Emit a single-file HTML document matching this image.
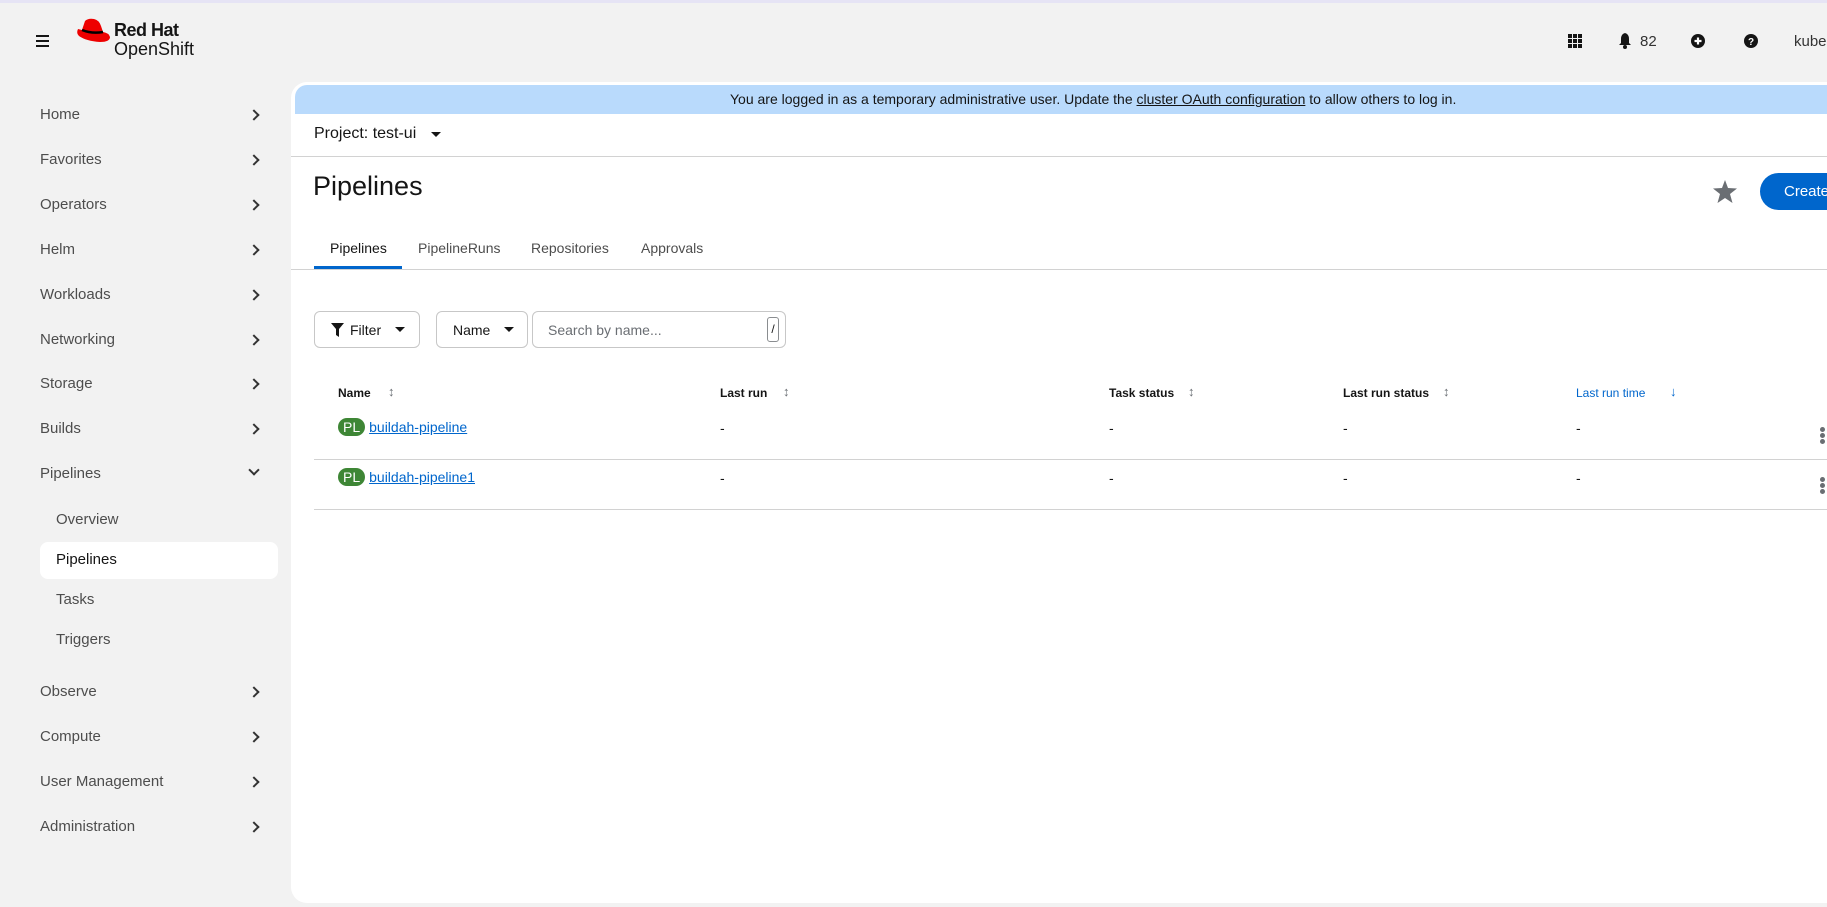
<!DOCTYPE html>
<html><head><meta charset="utf-8"><style>
*{box-sizing:border-box;margin:0;padding:0}
body{width:1827px;height:907px;overflow:hidden;background:#f2f2f2;font-family:"Liberation Sans",sans-serif;color:#151515;position:relative}
.a{position:absolute;white-space:nowrap}
.nav{font-size:15px;color:#4d4d4d;left:40px}
.chev{position:absolute;left:250px;width:8px;height:8px;border-right:2px solid #333;border-top:2px solid #333;transform:rotate(45deg)}
.panel{position:absolute;left:291px;top:82px;width:1560px;height:821px;background:#fff;border-radius:16px;overflow:hidden}
.th{font-size:12px;font-weight:bold;top:386px}
.sort{font-size:13px;color:#6a6e73;top:384px}
.cell{font-size:14px;color:#151515}
.pl{display:inline-block;background:#3e8635;color:#fff;border-radius:12px;padding:1px 5px;font-size:14px;margin-right:4px}
a{color:#0066cc}
.box{position:absolute;border:1px solid #c7c7c7;border-radius:6px;height:37px;top:311px;font-size:14px;display:flex;align-items:center}
.car{display:inline-block;width:0;height:0;border-left:5px solid transparent;border-right:5px solid transparent;border-top:5px solid #151515}
</style></head><body>
<div class="a" style="left:0;top:0;width:1827px;height:3px;background:#e6e4f5"></div>
<div class="a" style="left:36px;top:35px;width:13px;height:2px;background:#151515;box-shadow:0 5px 0 #151515,0 10px 0 #151515"></div>
<svg class="a" style="left:76px;top:18px" width="36" height="26" viewBox="0 0 36 26"><path d="M9 3 Q12 0 18 1 Q23 2 25 8 L27 14 Q33 15 34 19 Q34 24 24 24 Q10 23 3 18 Q0 15 2 11 L6 12 Z" fill="#e00"/><path d="M6 12 Q16 16 27 14" stroke="#000" stroke-width="2.5" fill="none"/></svg>
<div class="a" style="left:114px;top:20px;font-size:18px;font-weight:bold;letter-spacing:-0.5px">Red Hat</div>
<div class="a" style="left:114px;top:39px;font-size:18px">OpenShift</div>
<svg class="a" style="left:1568px;top:34px" width="14" height="14" viewBox="0 0 14 14" fill="#151515"><rect x="0" y="0" width="4" height="4"/><rect x="5" y="0" width="4" height="4"/><rect x="10" y="0" width="4" height="4"/><rect x="0" y="5" width="4" height="4"/><rect x="5" y="5" width="4" height="4"/><rect x="10" y="5" width="4" height="4"/><rect x="0" y="10" width="4" height="4"/><rect x="5" y="10" width="4" height="4"/><rect x="10" y="10" width="4" height="4"/></svg>
<svg class="a" style="left:1618px;top:33px" width="14" height="16" viewBox="0 0 14 16" fill="#151515"><path d="M7 0 Q11 1 11 6 L11 10 L13 12 L1 12 L3 10 L3 6 Q3 1 7 0Z"/><circle cx="7" cy="14" r="2"/></svg>
<div class="a" style="left:1640px;top:33px;font-size:15px;color:#333">82</div>
<svg class="a" style="left:1691px;top:34px" width="14" height="14" viewBox="0 0 14 14"><circle cx="7" cy="7" r="7" fill="#151515"/><path d="M7 3.5V10.5M3.5 7H10.5" stroke="#fff" stroke-width="2.2"/></svg>
<svg class="a" style="left:1744px;top:34px" width="14" height="14" viewBox="0 0 14 14"><circle cx="7" cy="7" r="7" fill="#151515"/><text x="7" y="11" font-size="10" font-weight="bold" fill="#fff" text-anchor="middle" font-family="Liberation Sans">?</text></svg>
<div class="a" style="left:1794px;top:33px;font-size:15px;color:#333">kube:</div>
<div class="a" style="left:40px;top:542px;width:238px;height:37px;background:#fff;border-radius:8px"></div>
<div class="a nav" style="top:106px">Home</div><div class="chev" style="top:111px"></div>
<div class="a nav" style="top:151px">Favorites</div><div class="chev" style="top:156px"></div>
<div class="a nav" style="top:196px">Operators</div><div class="chev" style="top:201px"></div>
<div class="a nav" style="top:241px">Helm</div><div class="chev" style="top:246px"></div>
<div class="a nav" style="top:286px">Workloads</div><div class="chev" style="top:291px"></div>
<div class="a nav" style="top:331px">Networking</div><div class="chev" style="top:336px"></div>
<div class="a nav" style="top:375px">Storage</div><div class="chev" style="top:380px"></div>
<div class="a nav" style="top:420px">Builds</div><div class="chev" style="top:425px"></div>
<div class="a nav" style="top:465px">Pipelines</div><div class="chev" style="top:466px;transform:rotate(135deg)"></div>
<div class="a nav" style="top:511px;left:56px">Overview</div>
<div class="a nav" style="top:551px;left:56px;color:#151515">Pipelines</div>
<div class="a nav" style="top:591px;left:56px">Tasks</div>
<div class="a nav" style="top:631px;left:56px">Triggers</div>
<div class="a nav" style="top:683px">Observe</div><div class="chev" style="top:688px"></div>
<div class="a nav" style="top:728px">Compute</div><div class="chev" style="top:733px"></div>
<div class="a nav" style="top:773px">User Management</div><div class="chev" style="top:778px"></div>
<div class="a nav" style="top:818px">Administration</div><div class="chev" style="top:823px"></div>
<div class="panel"></div>
<div class="a" style="left:295px;top:85px;width:1540px;height:29px;background:#b9dafc;border-radius:12px 0 0 0"></div>
<div class="a" style="left:730px;top:91px;font-size:14px;color:#151515">You are logged in as a temporary administrative user. Update the <span style="text-decoration:underline">cluster OAuth configuration</span> to allow others to log in.</div>
<div class="a" style="left:314px;top:125px;font-size:16px">Project: test-ui</div>
<span class="a car" style="left:431px;top:132px"></span>
<div class="a" style="left:291px;top:156px;width:1540px;height:1px;background:#d2d2d2"></div>
<div class="a" style="left:313px;top:171px;font-size:27px">Pipelines</div>
<svg class="a" style="left:1713px;top:180px" width="24" height="23" viewBox="0 0 24 23"><path d="M12 0 L15 8 L24 8.5 L17 14 L19.5 23 L12 18 L4.5 23 L7 14 L0 8.5 L9 8Z" fill="#6a6e73"/></svg>
<div class="a" style="left:1760px;top:173px;width:100px;height:37px;background:#0066cc;border-radius:19px;color:#fff;font-size:15px;padding:10px 0 0 24px">Create</div>
<div class="a" style="left:330px;top:240px;font-size:14px">Pipelines</div>
<div class="a" style="left:314px;top:266px;width:88px;height:3px;background:#0066cc"></div>
<div class="a" style="left:418px;top:240px;font-size:14px;color:#4d4d4d">PipelineRuns</div>
<div class="a" style="left:531px;top:240px;font-size:14px;color:#4d4d4d">Repositories</div>
<div class="a" style="left:641px;top:240px;font-size:14px;color:#4d4d4d">Approvals</div>
<div class="a" style="left:291px;top:269px;width:1540px;height:1px;background:#d2d2d2"></div>
<div class="box" style="left:314px;width:106px;padding-left:16px">
<svg width="13" height="14" viewBox="0 0 13 14"><path d="M0 0H13L8 6V14L5 12V6Z" fill="#151515"/></svg><span style="margin-left:6px">Filter</span><span class="car" style="margin-left:14px"></span></div>
<div class="box" style="left:436px;width:92px;padding-left:16px">Name<span class="car" style="margin-left:14px"></span></div>
<div class="box" style="left:532px;width:254px;padding-left:15px;color:#6a6e73">Search by name...<span style="position:absolute;right:6px;top:5px;width:12px;height:25px;border:1px solid #8a8d90;border-radius:3px;font-size:12px;color:#151515;text-align:center;line-height:23px">/</span></div>
<div class="a th" style="left:338px">Name</div><div class="a sort" style="left:388px">↕</div>
<div class="a th" style="left:720px">Last run</div><div class="a sort" style="left:783px">↕</div>
<div class="a th" style="left:1109px">Task status</div><div class="a sort" style="left:1188px">↕</div>
<div class="a th" style="left:1343px">Last run status</div><div class="a sort" style="left:1443px">↕</div>
<div class="a th" style="left:1576px;color:#0066cc;font-weight:normal;font-size:12px">Last run time</div><div class="a sort" style="left:1670px;color:#0066cc">↓</div>
<div class="a cell" style="left:338px;top:418px"><span class="pl">PL</span><a href="#">buildah-pipeline</a></div>
<div class="a cell" style="left:720px;top:420px">-</div><div class="a cell" style="left:1109px;top:420px">-</div><div class="a cell" style="left:1343px;top:420px">-</div><div class="a cell" style="left:1576px;top:420px">-</div>
<div class="a" style="left:1820px;top:427px;width:5px;height:5px;border-radius:50%;background:#6a6e73;box-shadow:0 6px 0 #6a6e73,0 12px 0 #6a6e73"></div>
<div class="a" style="left:314px;top:459px;width:1520px;height:1px;background:#d2d2d2"></div>
<div class="a cell" style="left:338px;top:468px"><span class="pl">PL</span><a href="#">buildah-pipeline1</a></div>
<div class="a cell" style="left:720px;top:470px">-</div><div class="a cell" style="left:1109px;top:470px">-</div><div class="a cell" style="left:1343px;top:470px">-</div><div class="a cell" style="left:1576px;top:470px">-</div>
<div class="a" style="left:1820px;top:477px;width:5px;height:5px;border-radius:50%;background:#6a6e73;box-shadow:0 6px 0 #6a6e73,0 12px 0 #6a6e73"></div>
<div class="a" style="left:314px;top:509px;width:1520px;height:1px;background:#d2d2d2"></div>
</body></html>
